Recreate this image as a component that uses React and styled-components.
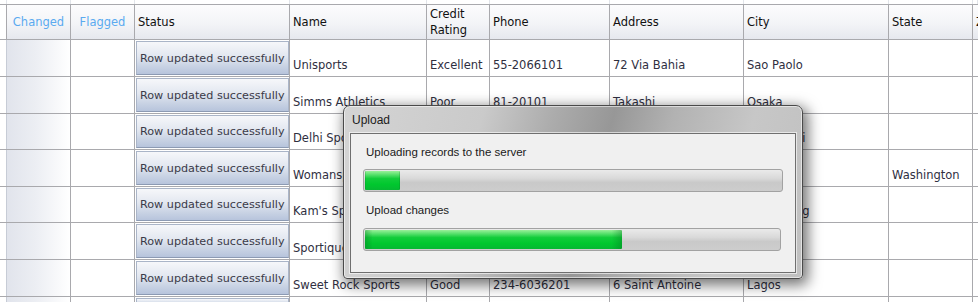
import React from "react";
import styled, { createGlobalStyle } from "styled-components";

const GlobalStyle = createGlobalStyle`
  html, body {
    margin: 0;
    padding: 0;
    background: #ffffff;
  }
  body {
    font-family: "DejaVu Sans", Verdana, sans-serif;
    overflow: hidden;
  }
`;

const COLUMNS = "7px 64px 64px 155px 137px 63px 120px 134px 145px 84px 1fr";

const Page = styled.div`
  position: relative;
  width: 978px;
  height: 302px;
  overflow: hidden;
  background: #ffffff;
`;

const Grid = styled.div`
  display: flex;
  flex-direction: column;
`;

const Row = styled.div`
  display: grid;
  grid-template-columns: ${COLUMNS};
  height: ${({ $h }) => $h}px;
  box-sizing: border-box;
  border-bottom: 1px solid #a9a9ad;
`;

const TopStrip = styled(Row)`
  height: 5px;
`;

const StripCell = styled.div`
  border-right: 1px solid #e2e5ea;
`;

const HeaderRow = styled(Row)`
  background: linear-gradient(to bottom, #fcfcfd 0%, #f3f4f7 55%, #e6e8ee 100%);
`;

const HeaderCell = styled.div`
  box-sizing: border-box;
  border-right: 1px solid #a9a9ad;
  display: flex;
  align-items: center;
  padding: 0 3px;
  font-size: 11.5px;
  line-height: 16px;
  color: ${({ $accent }) => ($accent ? "#5aaaf0" : "#111111")};
  justify-content: ${({ $accent }) => ($accent ? "center" : "flex-start")};
  white-space: pre-line;
  background: ${({ $blank }) => ($blank ? "#ffffff" : "transparent")};
`;

const Cell = styled.div`
  box-sizing: border-box;
  border-right: 1px solid #a9a9ad;
  display: flex;
  align-items: flex-end;
  padding: 0 3px 4px 3px;
  font-size: 11.5px;
  color: #2f2f3f;
  white-space: nowrap;
  overflow: hidden;
`;

const IndicatorCell = styled.div`
  border-right: 1px solid #c7ccd6;
  background: #ffffff;
`;

const ChangedCell = styled.div`
  box-sizing: border-box;
  border-right: 1px solid #a9a9ad;
  background: linear-gradient(to right, #e1e4ec 0%, #eceef3 45%, #ffffff 100%);
`;

const StatusCell = styled.div`
  box-sizing: border-box;
  border-right: 1px solid #a9a9ad;
  padding: 1px 0 1px 1px;
  display: flex;
`;

const StatusButton = styled.div`
  flex: 1;
  box-sizing: border-box;
  border: 1px solid #aab5c8;
  border-bottom-color: #8c9ab3;
  background: linear-gradient(to bottom, #f6f7fa 0%, #e2e7f0 45%, #c9d3e4 75%, #b7c4dc 100%);
  display: flex;
  align-items: center;
  padding-left: 3px;
  font-size: 11.2px;
  color: #3a3a48;
  white-space: nowrap;
  overflow: hidden;
`;

const Dialog = styled.div`
  position: absolute;
  left: 343px;
  top: 105px;
  width: 460px;
  height: 174px;
  box-sizing: border-box;
  border: 1px solid #4a4a4a;
  border-radius: 7px 7px 4px 4px;
  background: linear-gradient(
    105deg,
    #d4d4d4 0%,
    #cacaca 28%,
    #acacac 42%,
    #979797 54%,
    #b2b2b2 66%,
    #c7c7c7 82%,
    #c0c0c0 100%
  );
  box-shadow: 3px 4px 14px 2px rgba(0, 0, 0, 0.55), inset 0 0 0 1px rgba(255, 255, 255, 0.55);
  display: flex;
  flex-direction: column;
  padding: 0 6px 5px 6px;
  font-family: "Liberation Sans", Arial, sans-serif;
`;

const TitleBar = styled.div`
  height: 27px;
  display: flex;
  align-items: center;
  padding-left: 2px;
  font-size: 12px;
  color: #1c1c1c;
`;

const Client = styled.div`
  flex: 1;
  box-sizing: border-box;
  border: 1px solid #6f6f6f;
  box-shadow: 0 0 0 1px rgba(255, 255, 255, 0.6);
  background: #f0f0f0;
  padding: 11px 0 0 12px;
  display: flex;
  flex-direction: column;
`;

const Label = styled.div`
  font-size: 11.5px;
  color: #1a1a1a;
  height: 14px;
  line-height: 14px;
  padding-left: 3px;
  margin-bottom: ${({ $gap }) => $gap}px;
`;

const Bar = styled.div`
  width: ${({ $w }) => $w}px;
  height: 23px;
  box-sizing: border-box;
  border: 1px solid #a2a2a2;
  border-radius: 3px;
  background: linear-gradient(to bottom, #eaeaea 0%, #d9d9d9 40%, #c9c9c9 60%, #cdcdcd 100%);
  padding: 1px;
  margin-bottom: ${({ $gap }) => $gap}px;
  display: flex;
`;

const Fill = styled.div`
  height: 100%;
  border-radius: 1px;
  background:
    linear-gradient(to right, rgba(0, 110, 30, 0.35), rgba(0, 0, 0, 0) 3%, rgba(0, 0, 0, 0) 96%, rgba(0, 110, 30, 0.35)),
    linear-gradient(to bottom, #9af09a 0%, #55e06a 20%, #12cc3a 40%, #00c82e 70%, #05b832 100%);
`;

const rows = [
  { h: 37, name: "Unisports", credit: "Excellent", phone: "55-2066101", address: "72 Via Bahia", city: "Sao Paolo", state: "" },
  { h: 37, name: "Simms Athletics", credit: "Poor", phone: "81-20101", address: "Takashi", city: "Osaka", state: "" },
  { h: 36, name: "Delhi Sports", credit: "Fair", phone: "91-6381999", address: "11368 Chanakya", city: "New Delhi", state: "" },
  { h: 37, name: "Womansport", credit: "Good", phone: "1-206-555-6281", address: "3281 King Street", city: "Seattle", state: "Washington" },
  { h: 36, name: "Kam's Sporting Goods", credit: "Excellent", phone: "852-3692888", address: "15 Henessey Road", city: "Hong Kong", state: "" },
  { h: 37, name: "Sportique", credit: "Excellent", phone: "33-2257201", address: "172 Rue de Rivoli", city: "Cannes", state: "" },
  { h: 37, name: "Sweet Rock Sports", credit: "Good", phone: "234-6036201", address: "6 Saint Antoine", city: "Lagos", state: "" },
];

const headers = ["Name", "Credit\nRating", "Phone", "Address", "City", "State", "Z"];

const UploadDialog = () => (
  <Dialog>
    <TitleBar>Upload</TitleBar>
    <Client>
      <Label $gap={10}>Uploading records to the server</Label>
      <Bar $w={420} $gap={11}>
        <Fill style={{ width: "8.5%" }} />
      </Bar>
      <Label $gap={11}>Upload changes</Label>
      <Bar $w={418} $gap={0}>
        <Fill style={{ width: "62%" }} />
      </Bar>
    </Client>
  </Dialog>
);

export default function App() {
  return (
    <Page>
      <GlobalStyle />
      <Grid>
        <TopStrip $h={5}>
          {Array.from({ length: 11 }).map((_, i) => (
            <StripCell key={i} />
          ))}
        </TopStrip>
        <HeaderRow $h={35}>
          <HeaderCell $blank />
          <HeaderCell $accent>Changed</HeaderCell>
          <HeaderCell $accent>Flagged</HeaderCell>
          <HeaderCell>Status</HeaderCell>
          {headers.map((h) => (
            <HeaderCell key={h}>{h}</HeaderCell>
          ))}
        </HeaderRow>
        {rows.map((r) => (
          <Row key={r.name} $h={r.h}>
            <IndicatorCell />
            <ChangedCell />
            <Cell />
            <StatusCell>
              <StatusButton>Row updated successfully</StatusButton>
            </StatusCell>
            <Cell>{r.name}</Cell>
            <Cell>{r.credit}</Cell>
            <Cell>{r.phone}</Cell>
            <Cell>{r.address}</Cell>
            <Cell>{r.city}</Cell>
            <Cell>{r.state}</Cell>
            <Cell />
          </Row>
        ))}
        <Row $h={10}>
          <IndicatorCell />
          <ChangedCell />
          <Cell />
          <StatusCell>
            <StatusButton />
          </StatusCell>
          <Cell />
          <Cell />
          <Cell />
          <Cell />
          <Cell />
          <Cell />
          <Cell />
        </Row>
      </Grid>
      <UploadDialog />
    </Page>
  );
}
